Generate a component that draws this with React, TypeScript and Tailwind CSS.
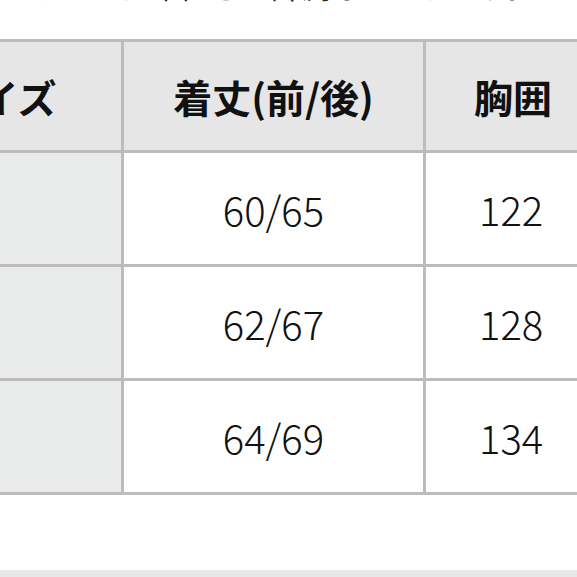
import React from 'react';

const rows = [
  { size: 'M', length: '60/65', chest: '122' },
  { size: 'L', length: '62/67', chest: '128' },
  { size: 'XL', length: '64/69', chest: '134' },
];

export default function App() {
  return (
    <div
      className="w-[577px] h-[577px] overflow-hidden bg-white relative"
      style={{ fontFamily: '"Noto Sans CJK JP", "Noto Sans", sans-serif' }}
    >
      {/* note line, scrolled mostly out of view */}
      <p className="mt-[-34px] h-[73px] pl-[2px] text-[30px] leading-[38px] text-[#222] whitespace-nowrap">
        ※サイズは平置きで計測しております。
      </p>

      <table className="ml-[-115px] w-[724px] border-collapse table-fixed text-[#111]">
        <colgroup>
          <col className="w-[236px]" />
          <col className="w-[302px]" />
          <col className="w-[186px]" />
        </colgroup>
        <thead>
          <tr className="h-[111px] bg-[#e6e6e6]">
            <th className="border-[3px] border-[#bcbcbc] text-[39px] font-bold text-center pr-[12px]">
              サイズ
            </th>
            <th className="border-[3px] border-[#bcbcbc] text-[39px] font-bold text-center">
              着丈(前/後)
            </th>
            <th className="border-[3px] border-[#bcbcbc] text-[39px] font-bold text-left pl-[48px]">
              胸囲
            </th>
          </tr>
        </thead>
        <tbody>
          {rows.map((r) => (
            <tr key={r.size} className="h-[114px]">
              {/* size label sits off-screen to the left */}
              <td className="border-[3px] border-[#bcbcbc] bg-[#e9eaea] text-[40px] font-light text-left pl-[10px]">
                {r.size}
              </td>
              <td className="border-[3px] border-[#bcbcbc] text-[40px] font-light text-center">
                {r.length}
              </td>
              <td className="border-[3px] border-[#bcbcbc] text-[40px] font-light text-left pl-[53px]">
                {r.chest}
              </td>
            </tr>
          ))}
        </tbody>
      </table>

      <div className="absolute left-0 right-0 top-[570px] h-[7px] bg-[#e8e8e8]" />
    </div>
  );
}
